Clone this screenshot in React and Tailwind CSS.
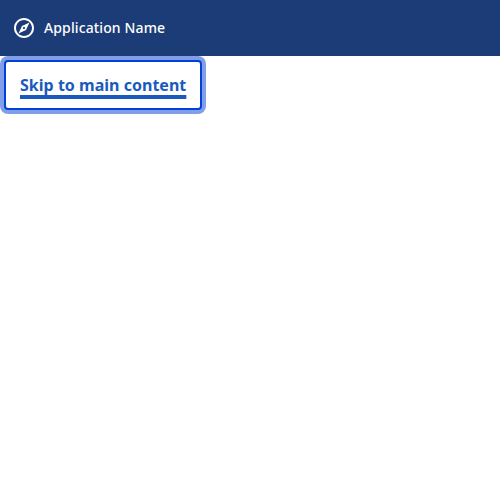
export default function App() {
  return (
    <div className="min-h-[500px] bg-white font-['Noto_Sans',sans-serif]">
      <header className="flex h-14 items-center gap-2 bg-[#1c3c78] px-3 text-white">
        <svg className="size-6" viewBox="0 0 24 24" fill="currentColor">
          <path d="M12 2C6.480 2 2 6.480 2 12s4.480 10 10 10 10-4.480 10-10S17.520 2 12 2zm0 18c-4.410 0-8-3.590-8-8s3.590-8 8-8 8 3.590 8 8-3.590 8-8 8zm-5.500-2.500l7.510-3.490L17.500 6.500 9.990 9.990 6.500 17.500zm5.500-6.600c.61 0 1.100.49 1.100 1.100s-.49 1.100-1.100 1.100-1.100-.49-1.100-1.100.49-1.100 1.100-1.100z" />
        </svg>
        <span className="text-sm font-medium tracking-[0.12px]">Application Name</span>
      </header>
      <a
        href="#main"
        className="m-1 inline-flex h-[50px] items-center rounded border-2 border-[#0041d9] bg-white px-[14px] text-base font-bold text-[#1a5abc] shadow-[0_0_0_4px_#809fe8]"
      >
        <span className="tracking-[0.02px] underline decoration-4 underline-offset-4">Skip to main content</span>
      </a>
    </div>
  );
}
